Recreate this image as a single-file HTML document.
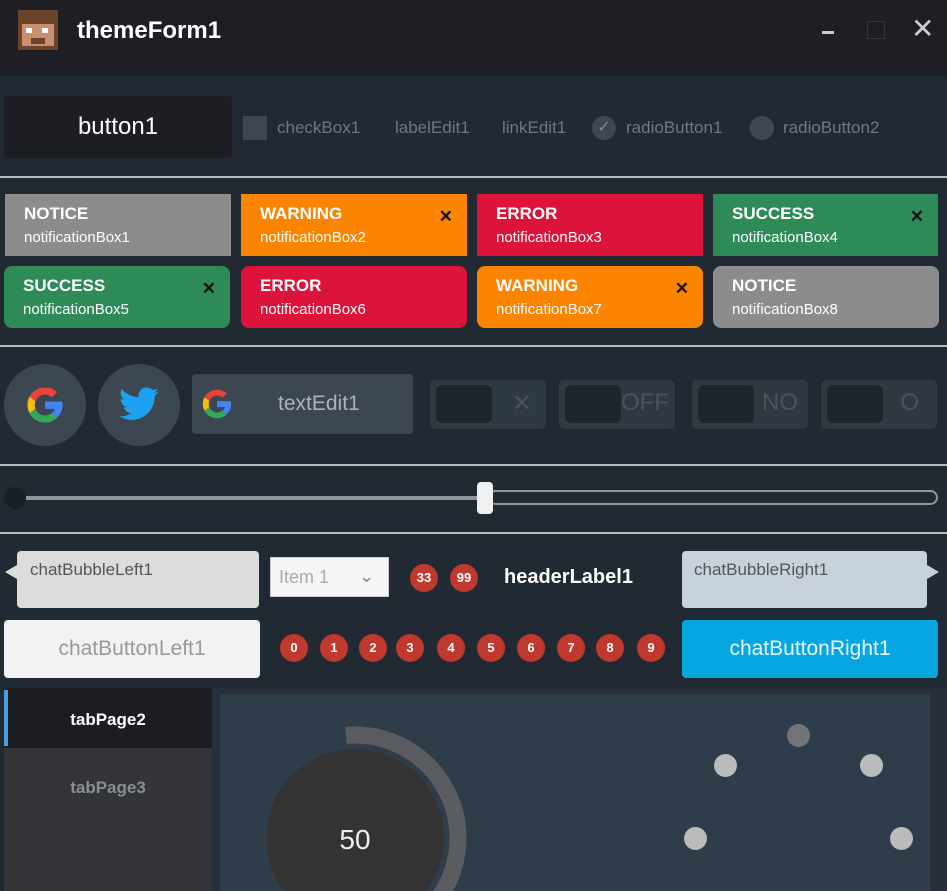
<!DOCTYPE html><html style="overflow:hidden"><head><style>
html,body{overflow:hidden}
body{margin:0;width:947px;height:891px;overflow:hidden;background:#212932;font-family:"Liberation Sans",sans-serif;position:relative}
div,span{position:absolute;box-sizing:border-box}
.sep{left:0;width:947px;height:2px;background:#b8bcc2}
.nb{width:226px;height:62px;color:#fff;padding:9px 0 0 19px;font-size:15px;line-height:25px}
.nb b{display:block;font-size:17px;line-height:22px}
.nb i{position:absolute;right:14px;top:10px;font-style:normal;color:#111;font-size:17px;font-weight:bold}
.tg{width:116px;height:49px;background:#2f3942;border-radius:5px;top:380px}
.tg .k{left:6px;top:5px;width:56px;height:38px;background:#1e252d;border-radius:6px}
.tg .t{right:10px;top:9px;font-size:24px;color:#4a535c}
.bd{width:28px;height:28px;border-radius:50%;background:#c0392f;color:#fff;font-size:13px;text-align:center;line-height:28px;top:634px;font-weight:bold}
.lb{color:#6f7882;font-size:17px;top:118px}
</style></head><body>
<div style="left:0;top:0;width:947px;height:76px;background:#1d1f24"></div>
<div style="left:18px;top:10px;width:40px;height:40px;background:#6b4329"></div>
<div style="left:22px;top:24px;width:32px;height:22px;background:#c98f72"></div>
<div style="left:26px;top:28px;width:6px;height:5px;background:#fff"></div>
<div style="left:42px;top:28px;width:6px;height:5px;background:#fff"></div>
<div style="left:31px;top:38px;width:14px;height:6px;background:#6b4329"></div>
<div style="left:77px;top:17px;color:#fff;font-size:24px;font-weight:bold">themeForm1</div>
<div style="left:822px;top:31px;width:12px;height:3px;background:#ccc"></div>
<div style="left:867px;top:21px;width:18px;height:18px;border:1px solid #33363c"></div>
<div style="left:911px;top:12px;color:#ccc;font-size:28px">✕</div>

<div style="left:4px;top:96px;width:228px;height:62px;background:#1c1e23;border-radius:4px;color:#fff;font-size:24px;text-align:center;line-height:62px">button1</div>
<div style="left:243px;top:116px;width:24px;height:24px;background:#3e4852"></div>
<div class="lb" style="left:277px">checkBox1</div>
<div class="lb" style="left:395px">labelEdit1</div>
<div class="lb" style="left:502px">linkEdit1</div>
<div style="left:592px;top:116px;width:24px;height:24px;border-radius:50%;background:#3e4852;color:#7f8891;font-size:16px;text-align:center;line-height:24px">✓</div>
<div class="lb" style="left:626px">radioButton1</div>
<div style="left:750px;top:116px;width:24px;height:24px;border-radius:50%;background:#3e4852"></div>
<div class="lb" style="left:783px">radioButton2</div>
<div class="sep" style="top:176px"></div>

<div class="nb" style="left:5px;top:194px;background:#8c8c8c"><b>NOTICE</b>notificationBox1</div>
<div class="nb" style="left:241px;top:194px;background:#fb8500"><b>WARNING</b>notificationBox2<i>✕</i></div>
<div class="nb" style="left:477px;top:194px;background:#dc143c"><b>ERROR</b>notificationBox3</div>
<div class="nb" style="left:713px;top:194px;background:#2e8b57;width:225px"><b>SUCCESS</b>notificationBox4<i>✕</i></div>
<div class="nb" style="left:4px;top:266px;background:#2e8b57;border-radius:8px"><b>SUCCESS</b>notificationBox5<i>✕</i></div>
<div class="nb" style="left:241px;top:266px;background:#dc143c;border-radius:8px"><b>ERROR</b>notificationBox6</div>
<div class="nb" style="left:477px;top:266px;background:#fb8500;border-radius:8px"><b>WARNING</b>notificationBox7<i>✕</i></div>
<div class="nb" style="left:713px;top:266px;background:#8c8c8c;border-radius:8px"><b>NOTICE</b>notificationBox8</div>
<div class="sep" style="top:345px"></div>

<div style="left:4px;top:364px;width:82px;height:82px;border-radius:50%;background:#3d4751"></div>
<svg style="position:absolute;left:24px;top:384px" width="42" height="42" viewBox="0 0 48 48"><path d="M43.6 20H24v8.4h11.3C33.7 33.1 29.3 36 24 36c-6.6 0-12-5.4-12-12s5.4-12 12-12c3 0 5.8 1.1 7.9 3l5.9-5.9C34.2 5.8 29.4 4 24 4 12.9 4 4 12.9 4 24s8.9 20 20 20 20-8.9 20-20c0-1.3-.1-2.7-.4-4z" fill="#4285f4"/><path d="M6.3 14.7l6.9 5.1C15 15.1 19.1 12 24 12c3 0 5.8 1.1 7.9 3l5.9-5.9C34.2 5.8 29.4 4 24 4 16.3 4 9.700 8.3 6.3 14.7z" fill="#ea4335"/><path d="M24 44c5.2 0 9.9-2 13.4-5.2l-6.2-5.2C29.2 35.1 26.7 36 24 36c-5.2 0-9.6-3.3-11.3-8l-6.5 5C9.5 39.6 16.2 44 24 44z" fill="#34a853"/><path d="M6.3 14.7l6.9 5.1c-.6 1.3-.9 2.7-.9 4.2s.3 2.900 .8 4.2l-6.5 5C5 30.4 4 27.3 4 24s.8-6.5 2.3-9.3z" fill="#fbbc05"/></svg>
<div style="left:98px;top:364px;width:82px;height:82px;border-radius:50%;background:#3d4751"></div>
<svg style="position:absolute;left:119px;top:387px" width="40" height="34" viewBox="0 0 24 20"><path d="M24 2.4c-.9.4-1.8.7-2.8.8 1-.6 1.8-1.6 2.2-2.7-1 .6-2 1-3.1 1.2C19.3.7 18 0 16.6 0c-2.7 0-4.9 2.2-4.9 4.9 0 .4 0 .8.1 1.1C7.7 5.8 4.1 3.9 1.700.9c-.4.7-.7 1.6-.7 2.500 0 1.7.9 3.2 2.2 4.1-.8 0-1.6-.2-2.2-.6v.1c0 2.4 1.7 4.4 3.9 4.8-.4.1-.8.2-1.3.2-.3 0-.6 0-.9-.1.6 2 2.4 3.4 4.6 3.4-1.7 1.3-3.800 2.1-6.1 2.1-.4 0-.8 0-1.2-.1 2.2 1.4 4.8 2.2 7.5 2.2 9.1 0 14-7.5 14-14v-.6c1-.7 1.8-1.6 2.5-2.5z" fill="#1da1f2"/></svg>
<div style="left:192px;top:374px;width:221px;height:60px;background:#3d4751;border-radius:4px;color:#aab2ba;font-size:21px;line-height:60px;padding-left:86px">textEdit1</div>
<svg style="position:absolute;left:200px;top:387px" width="34" height="34" viewBox="0 0 48 48"><path d="M43.6 20H24v8.4h11.3C33.7 33.1 29.3 36 24 36c-6.6 0-12-5.4-12-12s5.4-12 12-12c3 0 5.8 1.1 7.9 3l5.9-5.9C34.2 5.8 29.4 4 24 4 12.9 4 4 12.9 4 24s8.9 20 20 20 20-8.9 20-20c0-1.3-.1-2.7-.4-4z" fill="#4285f4"/><path d="M6.3 14.7l6.9 5.1C15 15.1 19.1 12 24 12c3 0 5.8 1.1 7.9 3l5.9-5.9C34.2 5.8 29.4 4 24 4 16.3 4 9.7 8.3 6.3 14.7z" fill="#ea4335"/><path d="M24 44c5.2 0 9.9-2 13.4-5.2l-6.2-5.2C29.2 35.1 26.7 36 24 36c-5.2 0-9.6-3.3-11.3-8l-6.5 5C9.5 39.6 16.2 44 24 44z" fill="#34a853"/><path d="M6.3 14.7l6.9 5.1c-.6 1.3-.9 2.7-.9 4.2s.3 2.9.8 4.2l-6.5 5C5 30.4 4 27.3 4 24s.8-6.5 2.3-9.3z" fill="#fbbc05"/></svg>
<div class="tg" style="left:430px"><div class="k"></div><div class="t" style="right:14px">✕</div></div>
<div class="tg" style="left:559px"><div class="k"></div><div class="t" style="right:6px">OFF</div></div>
<div class="tg" style="left:692px"><div class="k"></div><div class="t">NO</div></div>
<div class="tg" style="left:821px"><div class="k"></div><div class="t" style="right:18px">O</div></div>
<div class="sep" style="top:464px"></div>

<div style="left:4px;top:487px;width:22px;height:22px;border-radius:50%;background:#1a1f25"></div>
<div style="left:26px;top:496px;width:452px;height:4px;background:#8f969e"></div>
<div style="left:488px;top:490px;width:450px;height:15px;border:2px solid #8f969e;border-radius:8px"></div>
<div style="left:477px;top:482px;width:16px;height:32px;background:#f0f0f0;border-radius:4px"></div>
<div class="sep" style="top:532px"></div>

<div style="left:17px;top:551px;width:242px;height:57px;background:#dcdcdc;border-radius:4px;color:#555;font-size:17px;padding:9px 0 0 13px">chatBubbleLeft1</div>
<div style="left:5px;top:565px;width:0;height:0;border:7px solid transparent;border-right-color:#dcdcdc;border-left:0;border-right-width:12px"></div>
<div style="left:270px;top:557px;width:119px;height:40px;background:#f5f5f5;border:1px solid #ccc;color:#aaa;font-size:18px;padding:9px 0 0 8px;overflow:hidden">Item 1<span style="left:88px;top:8px;color:#888">⌄</span></div>
<div class="bd" style="left:410px;top:564px">33</div>
<div class="bd" style="left:450px;top:564px">99</div>
<div style="left:504px;top:566px;color:#fff;font-size:20px;font-weight:bold">headerLabel1</div>
<div style="left:682px;top:551px;width:245px;height:57px;background:#c8d2dc;border-radius:4px;color:#555;font-size:17px;padding:9px 0 0 12px">chatBubbleRight1</div>
<div style="left:927px;top:565px;width:0;height:0;border:7px solid transparent;border-left-color:#c8d2dc;border-right:0;border-left-width:12px"></div>

<div style="left:4px;top:620px;width:256px;height:58px;background:#f2f2f2;border-radius:4px;color:#999;font-size:21px;text-align:center;line-height:58px">chatButtonLeft1</div>
<div class="bd" style="left:280px">0</div><div class="bd" style="left:320px">1</div><div class="bd" style="left:359px">2</div><div class="bd" style="left:396px">3</div><div class="bd" style="left:437px">4</div><div class="bd" style="left:477px">5</div><div class="bd" style="left:517px">6</div><div class="bd" style="left:557px">7</div><div class="bd" style="left:596px">8</div><div class="bd" style="left:637px">9</div>
<div style="left:682px;top:620px;width:256px;height:58px;background:#06a6e0;border-radius:4px;color:#e6f6ff;font-size:21px;text-align:center;line-height:58px">chatButtonRight1</div>

<div style="left:4px;top:688px;width:208px;height:203px;background:#323438"></div>
<div style="left:4px;top:688px;width:208px;height:60px;background:#1c1d20;color:#fff;font-size:17px;font-weight:bold;text-align:center;line-height:64px">tabPage2</div>
<div style="left:4px;top:690px;width:4px;height:56px;background:#4a9ee0"></div>
<div style="left:4px;top:778px;width:208px;color:#8a8d92;font-size:17px;font-weight:bold;text-align:center">tabPage3</div>
<div style="left:212px;top:688px;width:735px;height:203px;background:#27303a"></div>
<div style="left:220px;top:694px;width:710px;height:197px;background:#2f3d4a"></div>
<svg style="position:absolute;left:240px;top:720px" width="240" height="171"><circle cx="115" cy="118" r="103" fill="none" stroke="#5a5c5f" stroke-width="17" stroke-dasharray="300 1000" transform="rotate(-95 115 118)"/><circle cx="115" cy="118" r="89" fill="#333333"/><text x="115" y="129" fill="#eee" font-size="28" text-anchor="middle" font-family="Liberation Sans">50</text></svg>
<div style="left:787px;top:724px;width:23px;height:23px;border-radius:50%;background:#6f757b"></div>
<div style="left:714px;top:754px;width:23px;height:23px;border-radius:50%;background:#bbbbbb"></div>
<div style="left:860px;top:754px;width:23px;height:23px;border-radius:50%;background:#bbbbbb"></div>
<div style="left:684px;top:827px;width:23px;height:23px;border-radius:50%;background:#bbbbbb"></div>
<div style="left:890px;top:827px;width:23px;height:23px;border-radius:50%;background:#bbbbbb"></div>
</body></html>
